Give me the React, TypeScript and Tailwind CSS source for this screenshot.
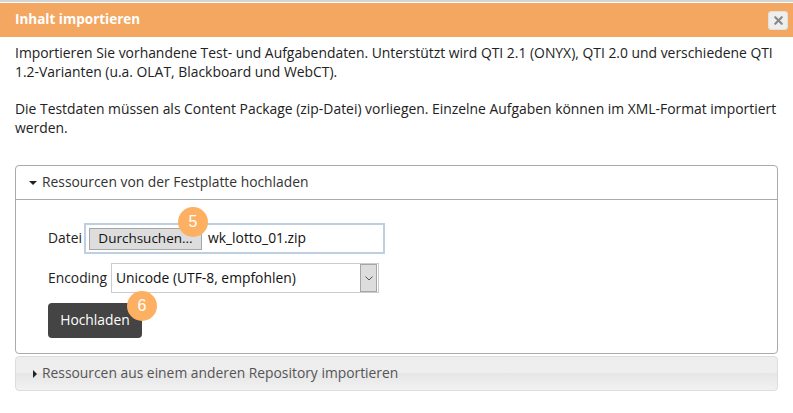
import {X} from "lucide-react";

function Badge({n, className}: {n: string; className: string}) {
    return (
        <span className={`absolute flex h-[30px] w-[30px] items-center justify-center rounded-full bg-[#fdb062] text-[16px] text-white font-['Liberation_Sans',sans-serif] ${className}`}>
            {n}
        </span>
    );
}

export default function App() {
    return (
        <div className="h-[413px] w-[793px] overflow-hidden bg-white font-['Open_Sans','Noto_Sans',sans-serif] text-[13.85px] leading-[18.5px] text-[#222222]">
            <div className="h-[3px] border-t-2 border-[#d4d4d4]" />
            <div className="flex h-[34px] items-center justify-between bg-[#f4a761] pl-[15px] pr-[5px]">
                <h1 className="mb-[2px] text-[13.5px] font-bold text-white">Inhalt importieren</h1>
                <button className="flex h-[19px] w-[20px] items-center justify-center rounded-[3px] border border-[#e0e0e0] bg-[#eeeeee]">
                    <X size={13} strokeWidth={4} className="text-[#888888]" />
                </button>
            </div>

            <div className="px-[15px] pt-[7px]">
                <p className="mr-[-4px] text-[13.9px]">
                    Importieren Sie vorhandene Test- und Aufgabendaten. Unterstützt wird QTI 2.1 (ONYX), QTI 2.0 und verschiedene QTI 1.2-Varianten (u.a. OLAT, Blackboard und WebCT).
                </p>
                <p className="mr-[-4px] mt-[19px] text-[13.9px]">
                    Die Testdaten müssen als Content Package (zip-Datei) vorliegen. Einzelne Aufgaben können im XML-Format importiert werden.
                </p>

                <section className="mt-[28px] h-[189px] rounded-[4px] border border-[#aaaaaa]">
                    <div className="flex h-[34px] items-center gap-[5px] border-b border-[#aaaaaa] pl-[13px] text-[#333333]">
                        <span className="h-0 w-0 border-x-[4px] border-t-[4px] border-x-transparent border-t-[#222222]" />
                        <span>Ressourcen von der Festplatte hochladen</span>
                    </div>
                    <div className="pl-[32px] pt-[23px]">
                        <div className="flex items-center">
                            <label className="w-[36px]">Datei</label>
                            <div className="relative flex h-[31px] w-[301px] items-center border-2 border-[#bcd0e2] pl-[3px]">
                                <span className="flex h-[22px] w-[113px] items-center justify-center border border-[#a6a6a6] bg-[#dddddd] text-[13.5px] text-[#111111]">Durchsuchen...</span>
                                <span className="ml-[6px] text-[#111111]">wk_lotto_01.zip</span>
                                <Badge n="5" className="left-[92px] top-[-18px]" />
                            </div>
                        </div>
                        <div className="mt-[9px] flex items-center">
                            <label className="w-[63px]">Encoding</label>
                            <div className="flex h-[30px] w-[268px] items-center justify-between border border-[#cccccc] pl-[4px] pr-[1px] text-[#111111]">
                                <span>Unicode (UTF-8, empfohlen)</span>
                                <span className="flex h-[28px] w-[17px] items-center justify-center border border-[#a6a6a6] bg-[#dddddd]">
                                    <svg width="8" height="5" viewBox="0 0 8 5" fill="none" stroke="#555555"><path d="M0.5 0.5 4 4 7.5 0.5" /></svg>
                                </span>
                            </div>
                        </div>
                        <div className="relative mt-[10px] w-fit">
                            <button className="h-[35px] w-[94px] rounded-[4px] bg-[#444444] text-[13.85px] text-white">Hochladen</button>
                            <Badge n="6" className="left-[79px] top-[-12px]" />
                        </div>
                    </div>
                </section>

                <section className="mt-[2px] flex h-[35px] items-center gap-[5px] rounded-[4px] border border-[#dddddd] bg-[linear-gradient(#eeeeee_0%,#eeeeee_50%,#e6e6e6_50%,#f2f2f2_100%)] pl-[17px] text-[#555555]">
                    <span className="h-0 w-0 border-y-[4px] border-l-[4px] border-y-transparent border-l-[#222222]" />
                    <span>Ressourcen aus einem anderen Repository importieren</span>
                </section>
            </div>
        </div>
    );
}
